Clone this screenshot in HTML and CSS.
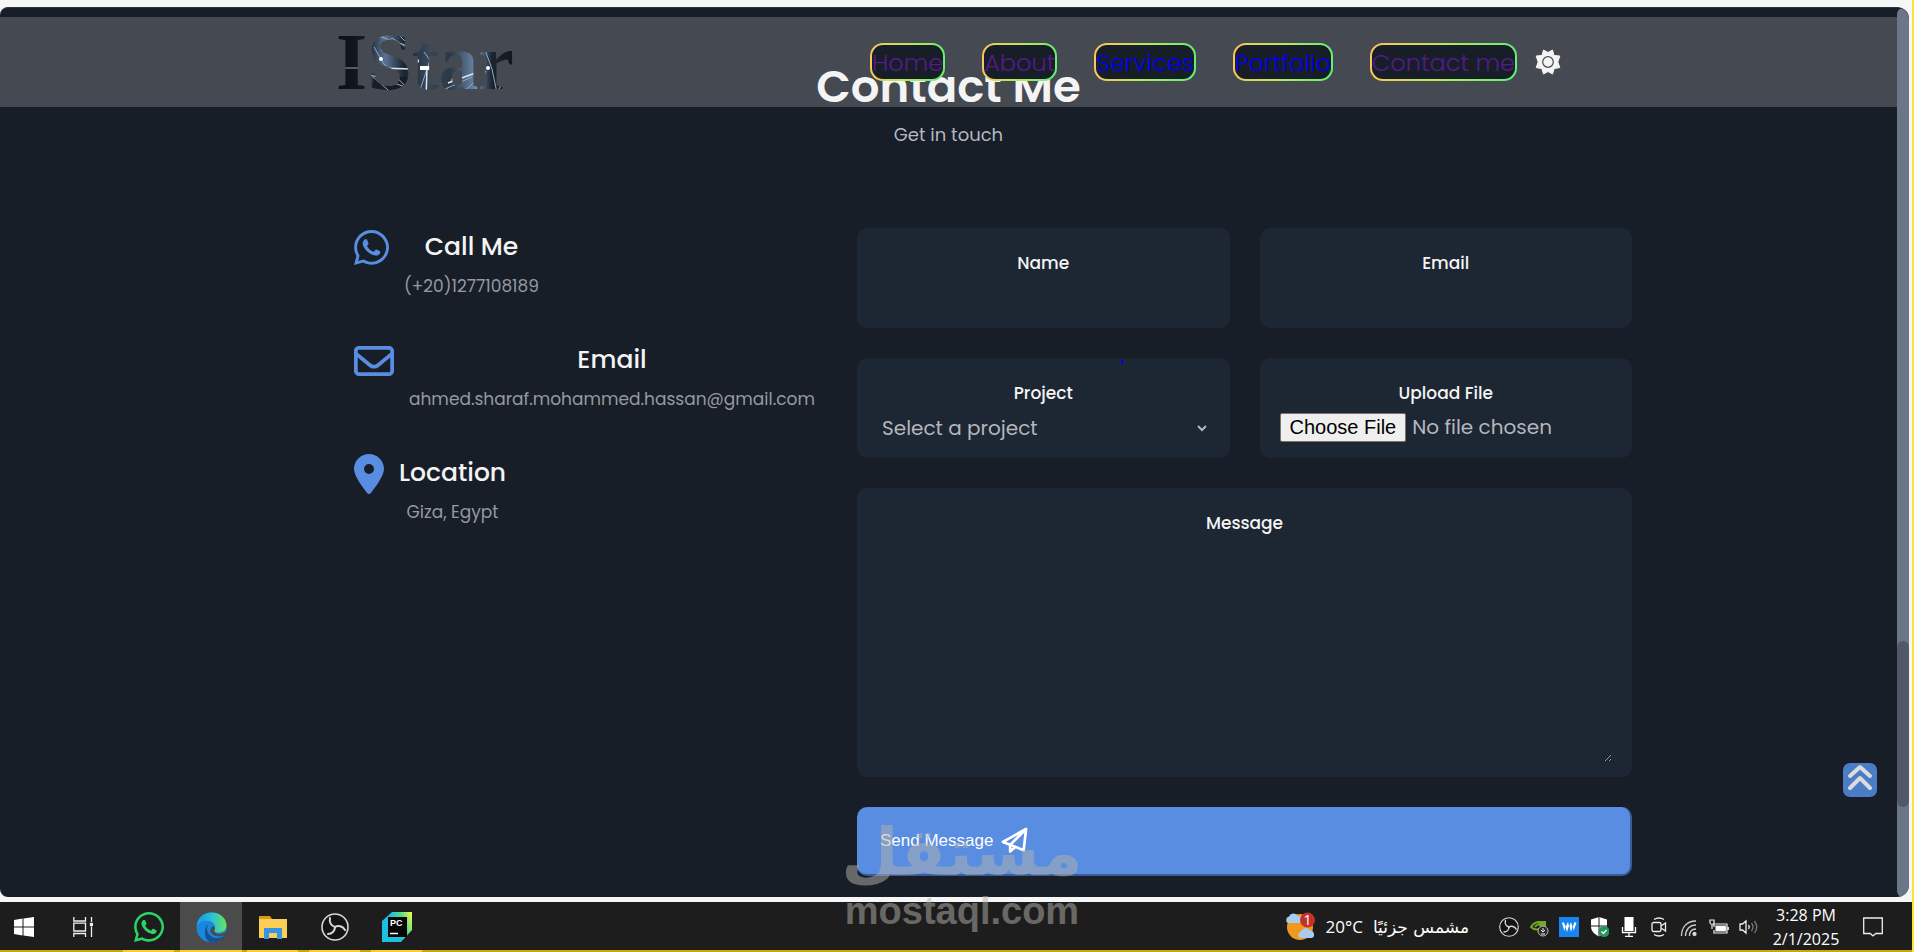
FILE: index.html
```html
<!DOCTYPE html>
<html lang="en">
<head>
<meta charset="utf-8">
<title>IStar - Contact Me</title>
<link rel="stylesheet" href="styles.css">
</head>
<body>
<svg class="defs" aria-hidden="true">
  <defs>
    <symbol id="whatsapp" viewBox="0 32 448 448"><path d="M380.9 97.1C339 55.1 283.2 32 223.9 32c-122.4 0-222 99.6-222 222 0 39.1 10.2 77.3 29.6 111L0 480l117.7-30.9c32.4 17.7 68.9 27 106.1 27h.1c122.3 0 224.1-99.6 224.1-222 0-59.3-25.2-115-67.1-157zm-157 341.6c-33.2 0-65.7-8.900-94-25.700l-6.700-4-69.800 18.300L72 359.200l-4.400-7c-18.500-29.400-28.200-63.300-28.200-98.200 0-101.700 82.800-184.500 184.600-184.500 49.300 0 95.600 19.200 130.400 54.100 34.800 34.900 56.200 81.200 56.100 130.500 0 101.800-84.900 184.600-186.600 184.600zm101.200-138.200c-5.500-2.800-32.800-16.200-37.900-18-5.100-1.900-8.800-2.800-12.500 2.800-3.700 5.600-14.300 18-17.600 21.800-3.200 3.700-6.500 4.200-12 1.400-32.600-16.300-54-29.100-75.500-66-5.700-9.800 5.700-9.100 16.300-30.300 1.800-3.700.9-6.900-.5-9.700-1.400-2.800-12.500-30.100-17.100-41.200-4.500-10.800-9.100-9.300-12.500-9.500-3.200-.2-6.900-.2-10.600-.2-3.700 0-9.700 1.400-14.800 6.900-5.100 5.600-19.400 19-19.400 46.300 0 27.300 19.900 53.700 22.600 57.400 2.800 3.700 39.100 59.700 94.800 83.800 35.200 15.200 49 16.500 66.600 13.900 10.700-1.600 32.800-13.400 37.400-26.400 4.600-13 4.600-24.100 3.200-26.400-1.300-2.500-5-3.900-10.500-6.600z"/></symbol>
    <symbol id="obs" viewBox="0 0 28 28"><circle cx="14" cy="14" r="13" fill="#141414" stroke="#d8d8d8" stroke-width="1.600"/><g fill="none" stroke="#d8d8d8" stroke-width="2" stroke-linecap="round"><path d="M9 5c-1 4 1 8 5 9"/><path d="M14 14c3-2 8-1 10 3"/><path d="M14 14c0 4-3 7-7 7"/></g></symbol>
  </defs>
</svg>
<div class="screen">
  <div class="browser">
    <div class="page">
      <header class="header">
        <div class="header-inner">
          <a class="brand" href="#home" aria-label="IStar">
            <svg width="190" height="90" viewBox="0 0 190 90">
              <defs>
                <linearGradient id="night" x1="0" x2="190" y1="0" y2="0" gradientUnits="userSpaceOnUse">
                  <stop offset="0" stop-color="#0c0e13"/><stop offset=".16" stop-color="#151a22"/><stop offset=".26" stop-color="#5a7391"/><stop offset=".36" stop-color="#1b232e"/><stop offset=".48" stop-color="#36475a"/><stop offset=".6" stop-color="#2c3846"/><stop offset=".74" stop-color="#6b8aad"/><stop offset=".82" stop-color="#1d242e"/><stop offset="1" stop-color="#0d0f13"/>
                </linearGradient>
                <pattern id="stars" width="190" height="90" patternUnits="userSpaceOnUse">
                  <rect width="190" height="90" fill="url(#night)"/>
                  <path d="M38 60h38l-10 20H34z" fill="#171d26"/>
                  <path d="M45 20L75 30L60 15zM35 58L75 72L60 80zM38 30L48 47L72 72M88 35L102 54L108 80M120 82L150 54L138 76zM148 30L156 52L161 76L174 50M100 76L136 60M95 40L80 85L112 72M45 34L56 21L70 30" fill="none" stroke="#8fa9c6" stroke-width="1"/>
                  <path d="M42 51L76 52M91 50L90 82M112 66L142 55" stroke="#d9e6f5" stroke-width="1.500"/>
                  <path d="M8 51H24" stroke="#5b7490" stroke-width="1.500"/>
                  <g fill="#fff"><circle cx="81" cy="44" r="2"/><rect x="84" y="49" width="12" height="4"/><circle cx="118" cy="63" r="2.500"/><circle cx="152" cy="51" r="2"/><circle cx="159" cy="75" r="2"/><circle cx="45" cy="42" r="2"/><circle cx="21" cy="74" r="1.400"/></g>
                </pattern>
              </defs>
              <text class="brand-text" x="0" y="72" fill="url(#stars)">IStar</text>
            </svg>
          </a>
          <nav class="nav" aria-label="Main">
            <a class="pill visited" href="#home">Home</a>
            <a class="pill visited" href="#about">About</a>
            <a class="pill" href="#services">Services</a>
            <a class="pill" href="#portfolio">Portfolio</a>
            <a class="pill visited" href="#contact">Contact me</a>
            <button class="theme" type="button" aria-label="Toggle theme">
              <svg width="26" height="26" viewBox="0 0 26 26"><path fill="#f4f4f4" stroke="#f4f4f4" stroke-width="1" stroke-linejoin="round" d="M13 3.500L17.500 1L19 6.500L24.800 7L22.800 13L24.800 18.600L19.200 19.500L17.500 25L13 22.500L8.500 25L6.800 19.500L1.200 18.600L3.200 13L1.200 7L7 6.500L8.500 1Z"/><circle cx="13" cy="13" r="5.300" fill="none" stroke="#454951" stroke-width="1.200"/></svg>
            </button>
          </nav>
        </div>
      </header>

      <main class="contact" id="contact">
        <h1 class="title">Contact Me</h1>
        <p class="subtitle">Get in touch</p>
        <div class="contact-grid">
          <section class="info">
            <div class="info-item">
              <svg class="info-icon" width="35" height="40" viewBox="0 0 35 40"><use href="#whatsapp" y="2" width="35" height="35"/></svg>
              <div><h2>Call Me</h2><p>(+20)1277108189</p></div>
            </div>
            <div class="info-item">
              <svg class="info-icon" width="40" height="40" viewBox="0 0 512 512"><path d="M64 112c-8.800 0-16 7.200-16 16v22.100L220.500 291.700c20.700 17 50.400 17 71.100 0L464 150.100V128c0-8.800-7.200-16-16-16H64zM48 212.200V384c0 8.800 7.200 16 16 16H448c8.800 0 16-7.200 16-16V212.200L322 328.800c-38.400 31.500-93.700 31.500-132 0L48 212.200zM0 128C0 92.700 28.700 64 64 64H448c35.300 0 64 28.700 64 64V384c0 35.300-28.700 64-64 64H64c-35.300 0-64-28.700-64-64V128z"/></svg>
              <div><h2>Email</h2><p>ahmed.sharaf.mohammed.hassan@gmail.com</p></div>
            </div>
            <div class="info-item">
              <svg class="info-icon" width="30" height="40" viewBox="0 0 384 512"><path d="M215.700 499.200C267 435 384 279.400 384 192C384 86 298 0 192 0S0 86 0 192c0 87.400 117 243 168.300 307.200c12.300 15.300 35.100 15.300 47.400 0zM192 128a64 64 0 1 1 0 128 64 64 0 1 1 0-128z"/></svg>
              <div><h2>Location</h2><p>Giza, Egypt</p></div>
            </div>
          </section>

          <form class="form">
            <div class="field">
              <label for="name">Name</label>
              <input class="control" id="name" type="text">
            </div>
            <div class="field">
              <label for="email">Email</label>
              <input class="control" id="email" type="email">
            </div>
            <div class="field">
              <span class="spark"></span>
              <label for="project">Project</label>
              <select class="control select" id="project"><option>Select a project</option></select>
            </div>
            <div class="field">
              <label for="file">Upload File</label>
              <input class="control file" id="file" type="file">
            </div>
            <div class="field wide">
              <label for="message">Message</label>
              <textarea class="control message" id="message"></textarea>
            </div>
            <button class="send wide" type="button">Send Message
              <svg width="27" height="27" viewBox="0 0 28 28" fill="none" stroke="#fff" stroke-width="2.800" stroke-linejoin="round"><path d="M26 2L2 15.500L9.500 18.500L23.500 24Z"/><path d="M26 2L9.500 18.500V25.500L14.500 21"/></svg>
            </button>
          </form>
        </div>
      </main>
      <a class="to-top" href="#home" aria-label="Back to top">
        <svg width="34" height="34" viewBox="0 0 34 34" fill="none" stroke="#dcdcdc" stroke-width="4" stroke-linecap="round" stroke-linejoin="round"><path d="M7 13L17 4L27 13"/><path d="M7 25L17 15L27 25"/></svg>
      </a>
    </div>
    <div class="scroll"><div class="thumb"></div></div>
  </div>

  <footer class="taskbar">
    <button class="task start" aria-label="Start"><svg width="20" height="20" viewBox="0 0 20 20" fill="#fff"><path d="M0 3L8.500 1.600V9.500H0zM9.500 1.400L20 0V9.500H9.500zM0 10.500H8.500V18.400L0 17zM9.500 10.500H20V20L9.500 18.600z"/></svg></button>
    <button class="task view" aria-label="Task view"><svg width="20" height="20" viewBox="0 0 20 20" fill="none" stroke="#eee" stroke-width="1.300"><path d="M.8 0V4H12.500V0M.8 20V16.500H12.500V20M.8 6.200H12.500V14H.8zM18.500 0V5M18.500 9.500V20"/><rect x="17.500" y="6.500" width="2" height="2" fill="#fff"/></svg></button>
    <button class="task running" aria-label="WhatsApp"><svg width="30" height="30" fill="#2bd467"><use href="#whatsapp" width="30" height="30"/></svg></button>
    <button class="task running active" aria-label="Edge"><svg width="31" height="31" viewBox="0 0 31 31"><defs><linearGradient id="edge" x1="0" x2="1"><stop offset=".2" stop-color="#1ba4e8"/><stop offset=".55" stop-color="#2cc6cf"/><stop offset="1" stop-color="#6be35a"/></linearGradient></defs><circle cx="15.500" cy="15.500" r="15" fill="#1a86dc"/><path fill="url(#edge)" d="M.7 13C2 5 8 .5 15.500 .5c9 0 15 6 15 13 0 5-4 7-8 7-4 0-5-1-4.500-2 2-3 1-7-3-9-5-2-11 0-14.300 3.500z"/><path fill="#155093" d="M12 12c-3 6 1 14 9 14 3 0 6-1 8-3-3 5-8 8-13.500 7.500C8 29 7 17 12 12z"/><path fill="#4b4b4b" d="M18.500 18c-1 2 2 4.500 6 3.800 2-.3 4-1.200 5-2.300v3c-4 3-11 2.500-14-1-2-3-1-6 1.500-7.500 2 0 2.500 2 1.500 4z"/></svg></button>
    <button class="task running" aria-label="File Explorer"><svg width="28" height="24" viewBox="0 0 28 24"><path fill="#d99a13" d="M0 1h11l2 3v4H0z"/><path fill="#fbcf55" d="M0 4h28v19H0z"/><path fill="#3a94e4" d="M5 13h18v11h-5v-6h-8v6H5z"/></svg></button>
    <button class="task running" aria-label="OBS Studio"><svg width="28" height="28"><use href="#obs"/></svg></button>
    <button class="task running" aria-label="PyCharm"><svg width="30" height="30" viewBox="0 0 30 30"><defs><linearGradient id="pyc" x1="0" y1=".4" x2="1" y2="0"><stop offset=".35" stop-color="#1cbfe0"/><stop offset=".65" stop-color="#57dc85"/><stop offset="1" stop-color="#fcf84a"/></linearGradient></defs><path fill="url(#pyc)" d="M0 9L10 0H30V18L19 30H0z"/><rect x="6" y="5" width="19" height="20" fill="#050505"/><text class="pc" x="8" y="14">PC</text><path d="M8 21.500h8" stroke="#fff" stroke-width="1.500"/></svg></button>
    <div class="weather">
      <svg width="30" height="30" viewBox="0 0 30 30"><circle cx="15" cy="15" r="13" fill="#f2981f"/><g fill="#a9cdee"><path d="M3 11a3.500 3.500 0 0 1 1-6.500A5 5 0 0 1 13 4a4 4 0 0 1 3 7z"/><path d="M15 26a3.500 3.500 0 0 1 1-6.500 5 5 0 0 1 9-1 4 4 0 0 1 2 7.500z"/></g><circle cx="22.500" cy="8" r="7.500" fill="#c3312c"/><text class="badge" x="22.500" y="13">1</text></svg>
      <span>20°C</span><span lang="ar" dir="rtl">مشمس جزئيًا</span>
    </div>
    <div class="tray">
      <svg viewBox="0 0 28 28"><use href="#obs"/></svg>
      <svg viewBox="0 0 20 20"><path fill="none" stroke="#6fa822" stroke-width="2" d="M2 10c4-6 9-6 13-2-3 5-9 6-13 2zM6 10c2-3 5-3 7-1"/><path fill="#6fa822" d="M8 4h9v8h-5z"/><circle cx="14" cy="14" r="5" fill="#2a2a2a" stroke="#bbb"/><path stroke="#eee" d="M14 11v4m-2-2l2 2l2-2M12 17h4"/></svg>
      <svg viewBox="0 0 20 20"><path fill="#1784ef" d="M0 0h20v20H0z"/><path fill="#fff" d="M3 6L4.500 5L6.500 9L5.500 14zM6.500 10L9 5L10 9L8 15zM10.500 9L12 5L13.500 10L12 15zM14 9L15.500 5L17.500 6L14.500 14z"/></svg>
      <svg viewBox="0 0 20 20"><path fill="#fff" d="M10 0l8 2.500v7c0 5-4 8-8 10-4-2-8-5-8-10v-7z"/><path stroke="#1d1d1d" d="M10 0v20M2 9h17"/><circle cx="15" cy="14.500" r="5.500" fill="#26965a"/><path fill="none" stroke="#fff" stroke-width="1.300" d="M12.500 14.500l2 2l3-3.500"/></svg>
      <svg viewBox="0 0 20 20"><rect x="5.500" y="0" width="9" height="14" fill="#fff"/><path fill="none" stroke="#fff" stroke-width="1.300" d="M3.500 10v5.500h13V10M10 15.500V19M6 19.300h8"/></svg>
      <svg viewBox="0 0 20 20" fill="none" stroke="#eee" stroke-width="1.300"><rect x="3" y="5.500" width="9" height="9" rx="1.500"/><path d="M12 9l4.500-3v8L12 11M5 2.500q5-3 10 0M5 17.500q5 3 10 0"/></svg>
      <svg viewBox="0 0 20 20" fill="none" stroke="#ccc" stroke-width="1.300"><path d="M2.500 19C2.500 10 8 4 17 4M6.500 19c0-6 4-11 10.500-11M10.500 19c0-4 2-7 6.500-7"/><circle cx="15.500" cy="17" r="1.500" fill="#fff"/></svg>
      <svg viewBox="0 0 20 20" fill="none" stroke="#eee" stroke-width="1.200"><path d="M5 10V7h13v9H5v-3M19.300 10v3M1 3v3q2 3 4 0V3zM3 8v4"/><path fill="#fff" d="M7 9h9.500v5H7z"/></svg>
      <svg viewBox="0 0 20 20" fill="none" stroke="#eee" stroke-width="1.300"><path d="M1 7h2.500L7 4v12l-3.500-3H1zM9.500 8q1.500 2 0 4"/><path stroke="#777" d="M12.500 6q3 4 0 8M15.500 4q4.500 6 0 12"/></svg>
    </div>
    <time class="clock"><span>3:28 PM</span><span>2/1/2025</span></time>
    <button class="task notice" aria-label="Notifications"><svg width="20" height="20" viewBox="0 0 20 20" fill="none" stroke="#eee" stroke-width="1.300"><path d="M.7 1h18.600v15.500h-6.500L10 19l-2.800-2.500H.7z"/></svg></button>
  </footer>
  <div class="watermark"><span lang="ar" dir="rtl">مستقل</span><strong>mostaql.com</strong></div>
</div>
</body>
</html>
```
FILE: styles.css
```css
* { box-sizing: border-box; }
body {
  margin: 0;
  background: #f6f6f6;
  color: #f4f4f4;
  font-family: Poppins, Inter, sans-serif;
  font-size: 17px;
  line-height: 24px;
}
h1, h2, p { margin: 0; }
button { font: inherit; color: inherit; border: 0; background: none; padding: 0; }
.defs { position: absolute; width: 0; height: 0; }

.screen {
  position: relative;
  display: flex;
  flex-direction: column;
  height: 100vh;
  padding-top: 7px;
  border-right: 2px solid #ffe135;
  overflow: hidden;
}
.browser {
  flex: 1;
  min-height: 0;
  display: flex;
  margin: 0 3px 5px 0;
  background: #171e27;
  border-top: 1px solid #2e343d;
  border-radius: 8px 12px 12px 8px;
  overflow: hidden;
}
.page { position: relative; flex: 1; overflow: hidden; padding-top: 9px; }
.scroll { width: 12px; background: #6b7688; border-radius: 8px; padding-top: 633px; }
.thumb { height: 166px; border-radius: 6px; background: #525868; }

.header { height: 90px; background: #454951; }
.header-inner {
  display: flex;
  align-items: center;
  justify-content: space-between;
  max-width: 1225px;
  height: 90px;
  margin: 0 auto;
}
.brand { display: flex; }
.brand svg { overflow: visible; }
.brand-text { font-family: "Liberation Serif", serif; font-weight: 700; font-size: 80px; }
.nav { position: relative; z-index: 2; display: flex; align-items: center; gap: 37px; }
.pill {
  padding-top: 2px;
  border: 2px solid transparent;
  border-radius: 13px;
  background: linear-gradient(#171e27, #171e27) padding-box, linear-gradient(100deg, #ffc25c, #b4ea58 50%, #5cf078) border-box;
  color: #0000ee;
  font-size: 24px;
  font-weight: 300;
  line-height: 32px;
  text-decoration: none;
}
.pill.visited { color: #551a8b; }
.theme { display: flex; margin-left: -19px; }

.contact { padding-left: 89px; }
.title, .subtitle { position: relative; z-index: 1; margin-right: 89px; text-align: center; }
.title { margin-top: -48px; font-size: 45px; font-weight: 600; line-height: 56px; }
.subtitle { margin-top: 8px; color: #b4b9c2; font-size: 18px; }
.contact-grid {
  display: grid;
  grid-template-columns: 473px 1fr;
  gap: 30px;
  max-width: 1278px;
  margin: 81px auto 0;
}
.info { display: flex; flex-direction: column; gap: 43px; }
.info-item { display: flex; align-items: flex-start; gap: 15px; text-align: center; }
.info-icon { flex: none; fill: #588de1; }
.info-item h2 { font-size: 25px; font-weight: 500; line-height: 37px; }
.info-item p { margin-top: 9px; color: #9599a0; }

.form { display: grid; grid-template-columns: 1fr 1fr; gap: 30px; }
.wide { grid-column: 1 / -1; }
.field {
  position: relative;
  display: flex;
  flex-direction: column;
  padding: 23px 20px 15px;
  border-radius: 10px;
  background: #1d2633;
}
.field label { margin-bottom: 8px; text-align: center; font-weight: 500; }
.control {
  width: 100%;
  height: 30px;
  padding: 0;
  border: 0;
  background: transparent;
  color: #b4b7bd;
  font: 20px/28px Poppins, Inter, sans-serif;
}
.select { padding: 0 2px 0 1px; }
.file::file-selector-button {
  height: 29px;
  margin-right: 6px;
  padding: 0 9px;
  border: 1px solid #77746c;
  border-radius: 2px;
  background: #efefef;
  color: #000;
  font: 20px "Liberation Sans", sans-serif;
}
.message { height: 219px; resize: vertical; }
.spark { position: absolute; top: 2px; left: 71%; width: 2px; height: 4px; background: #0000ee; }
.send {
  display: flex;
  align-items: center;
  gap: 8px;
  height: 69px;
  padding: 0 23px;
  border-right: 2px solid #3b5c98;
  border-bottom: 2px solid #3b5c98;
  border-radius: 10px;
  background: #588de1;
  color: #fff;
  font-family: "Liberation Sans", sans-serif;
}
.to-top {
  position: absolute;
  right: 20px;
  bottom: 100px;
  display: flex;
  border-radius: 7px;
  background: #4b7dc6;
}

.taskbar {
  display: flex;
  height: 50px;
  padding-right: 14px;
  background: #1d1d1d;
  border-bottom: 2px solid #c8a80c;
  font-family: "Open Sans", sans-serif;
  color: #fff;
}
.task { position: relative; display: flex; flex: none; align-items: center; justify-content: center; width: 62px; padding-top: 2px; }
.start { width: 48px; }
.view { width: 70px; }
.active { background: #4b4b4b; }
.running::after { content: ""; position: absolute; left: 5px; right: 6px; bottom: -2px; height: 2px; background: #ffca30; }
.active::after { left: 0; right: 0; }
.pc { font: 700 9px "Liberation Sans", sans-serif; fill: #fff; }
.weather { display: flex; align-items: center; gap: 10px; margin-left: auto; margin-right: 25px; padding-top: 2px; }
.weather [lang] { font-family: "DejaVu Sans", sans-serif; }
.badge { font: 14px "Open Sans", sans-serif; fill: #fff; text-anchor: middle; }
.tray { display: flex; align-items: center; padding-top: 2px; }
.tray svg { width: 20px; height: 20px; margin: 0 5px; }
.clock { display: flex; flex-direction: column; justify-content: center; width: 84px; padding-top: 2px; text-align: center; font-size: 16px; }
.notice { width: 50px; }

.watermark {
  position: absolute;
  left: 44%;
  bottom: 19px;
  display: flex;
  flex-direction: column;
  align-items: center;
  color: #b4b2ac;
  opacity: 0.5;
  pointer-events: none;
}
.watermark span { font: 700 66px/72px "DejaVu Sans", sans-serif; }
.watermark strong { font: 700 38px/44px "Liberation Sans", sans-serif; }
```
